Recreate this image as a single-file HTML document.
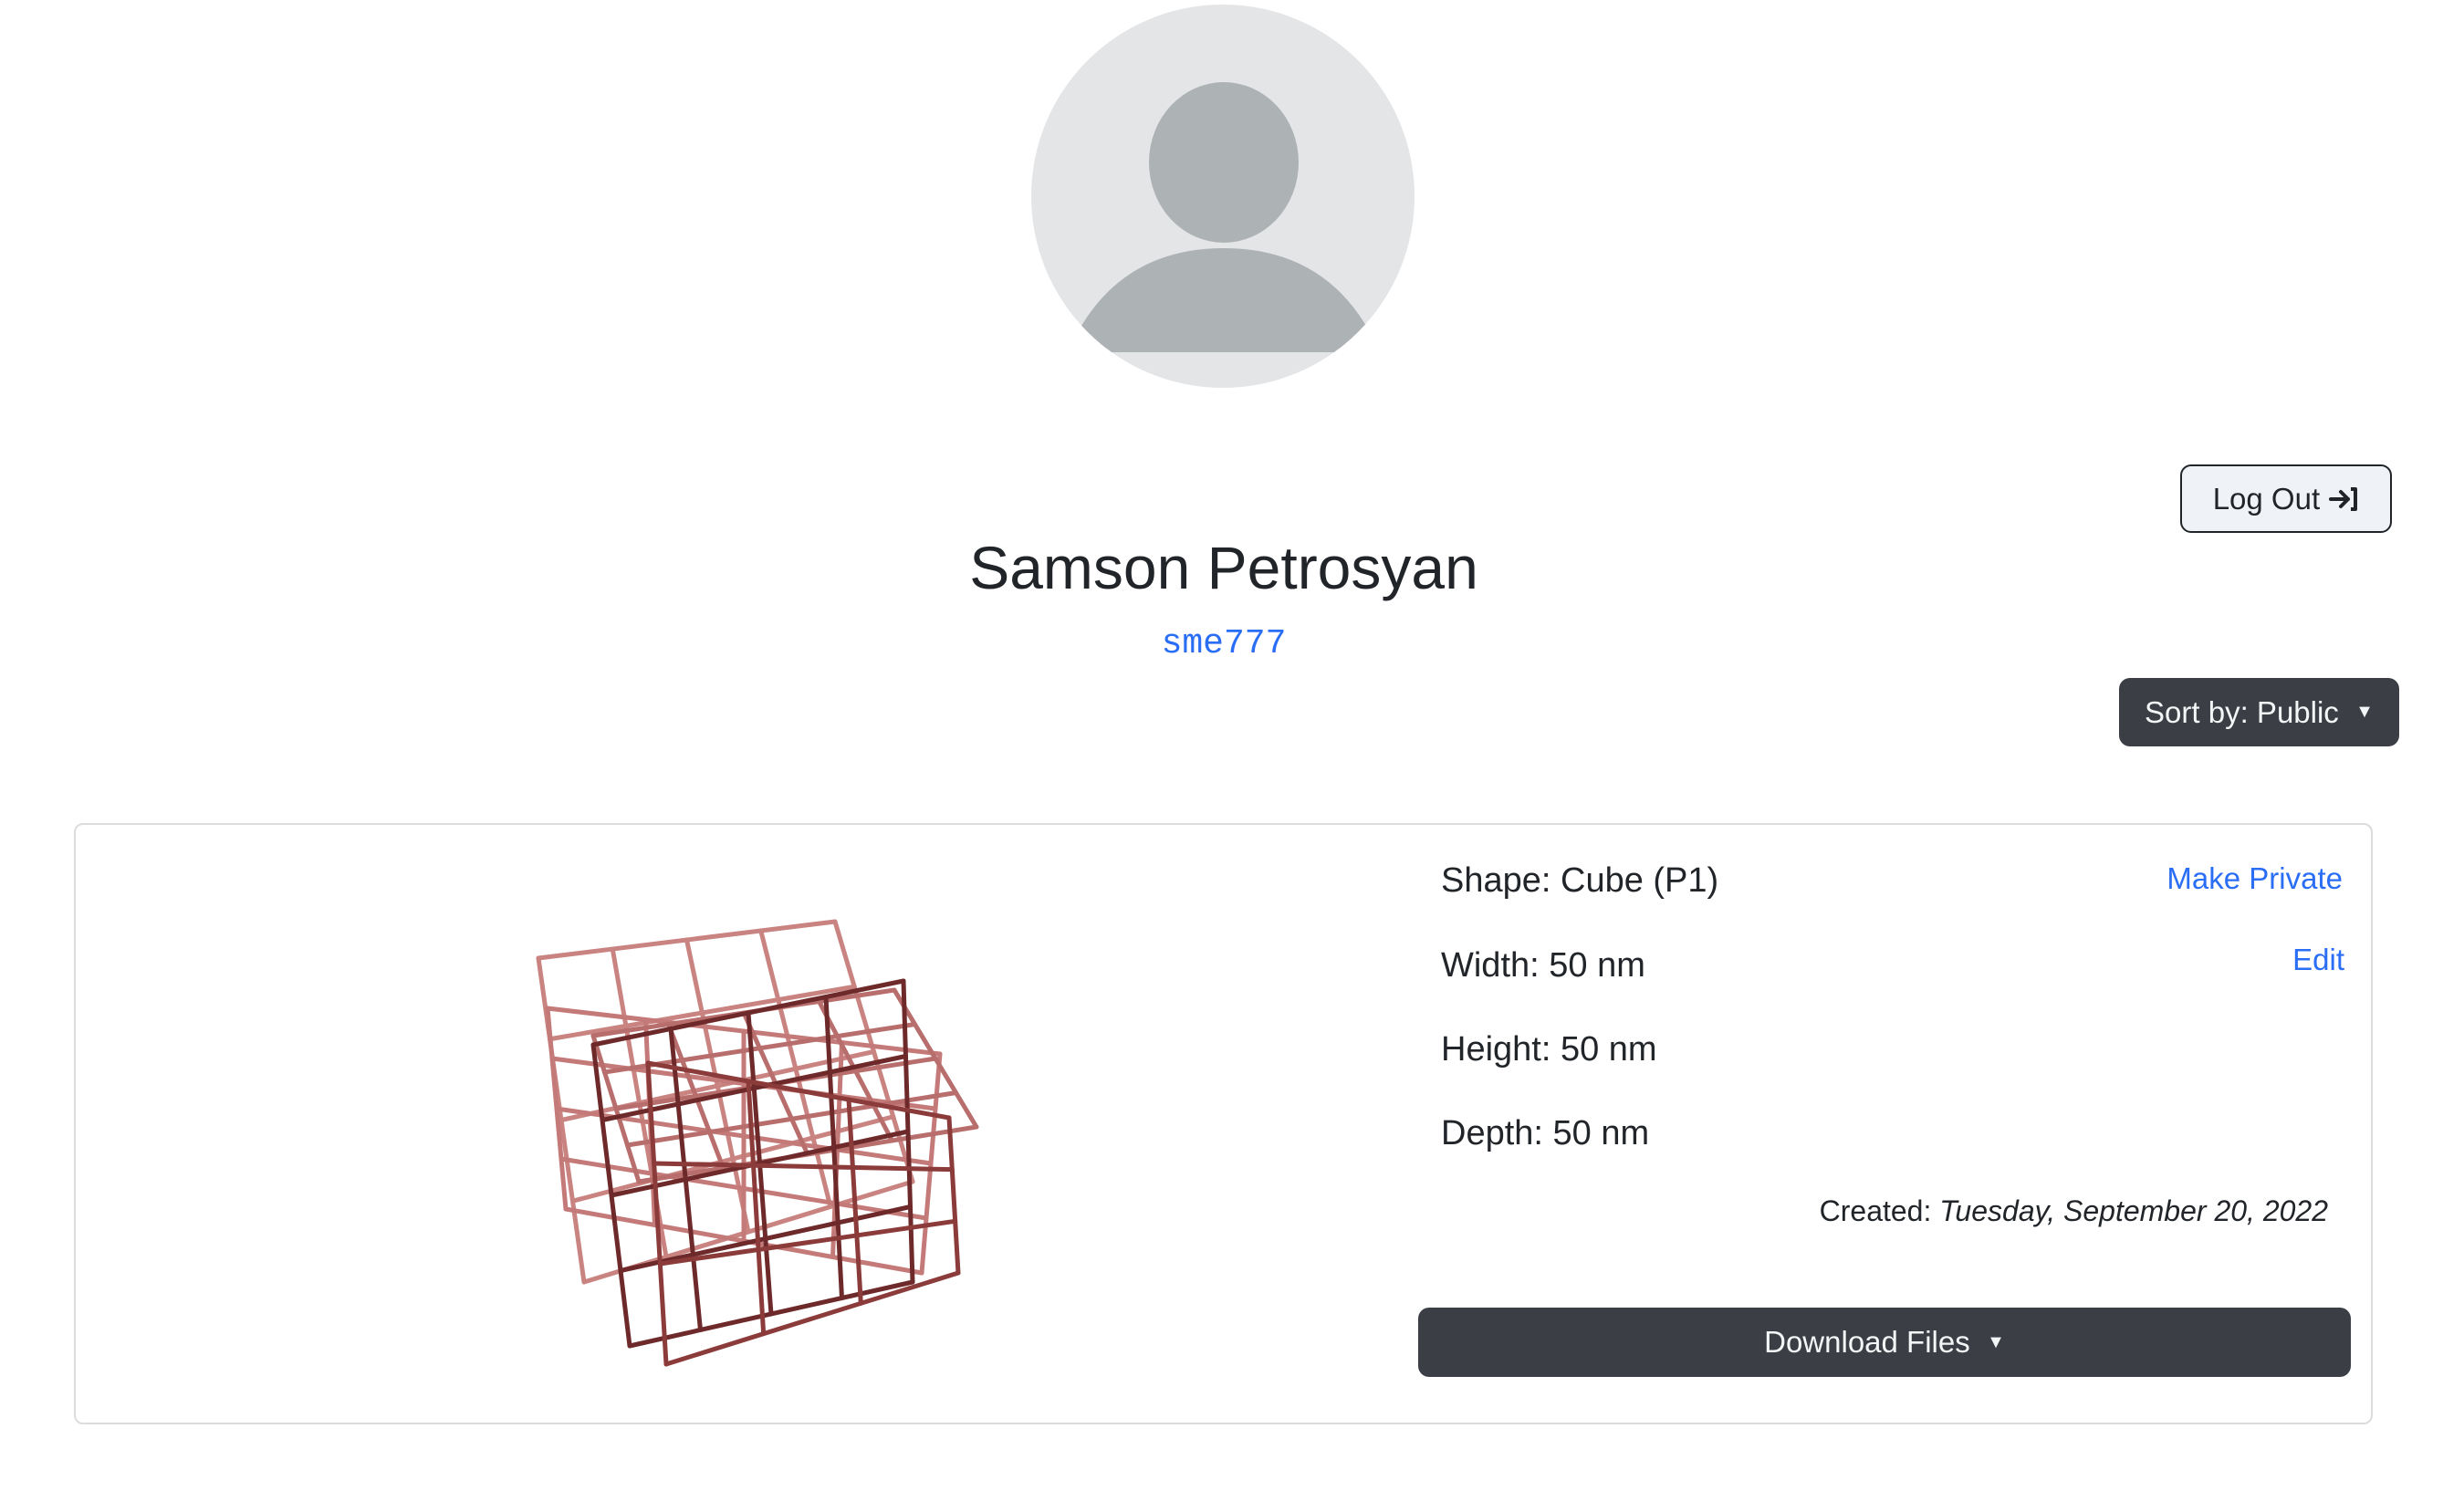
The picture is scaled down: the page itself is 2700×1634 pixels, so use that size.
<!DOCTYPE html>
<html><head><meta charset="utf-8">
<style>
html,body{margin:0;padding:0;background:#fff;}
body{width:2700px;height:1634px;position:relative;overflow:hidden;font-family:"Liberation Sans",sans-serif;color:#212529;}
.abs{position:absolute;}
.btn{position:absolute;box-sizing:border-box;border-radius:12px;display:flex;align-items:center;justify-content:center;font-size:33px;}
</style></head><body>
<svg class="abs" style="left:0;top:0" width="2700" height="440">
  <defs><clipPath id="c"><circle cx="1340" cy="215" r="210"/></clipPath></defs>
  <circle cx="1340" cy="215" r="210" fill="#e4e5e7"/>
  <g clip-path="url(#c)">
    <ellipse cx="1341" cy="178" rx="82" ry="88" fill="#adb2b4"/>
    <path d="M1170 386 Q1220 272 1341 272 Q1462 272 1512 386 Z" fill="#adb2b4"/>
  </g>
</svg>

<div class="btn" style="left:2389px;top:509px;width:232px;height:75px;background:#eff2f7;border:2px solid #212529;color:#212529;">Log Out&nbsp;<svg width="34" height="30" viewBox="0 0 34 30"><path d="M3 15 H22 M14 7 L22 15 L14 23" stroke="#212529" stroke-width="4" fill="none" stroke-linecap="round" stroke-linejoin="round"/><path d="M25 4 H30 V26 H25" stroke="#212529" stroke-width="4" fill="none" stroke-linejoin="round"/></svg></div>

<div class="abs" style="left:0;width:2682px;top:584px;text-align:center;font-size:66px;color:#212529;">Samson Petrosyan</div>
<div class="abs" style="left:0;width:2682px;top:684px;text-align:center;font-size:38px;color:#2a6ef5;font-family:'Liberation Mono',monospace;">sme777</div>

<div class="btn" style="left:2322px;top:743px;width:307px;height:75px;background:#3b3f45;color:#f4f5f7;">Sort by: Public&nbsp;&nbsp;<span style="font-size:20px">▼</span></div>

<div class="abs" style="left:81px;top:902px;width:2519px;height:659px;box-sizing:border-box;border:2px solid #dcdcdc;border-radius:10px;"></div>

<svg id="cube" class="abs" style="left:580px;top:995px" width="540" height="530"></svg>

<div class="abs" style="left:1579px;top:944px;font-size:38px;">Shape: Cube (P1)</div>
<div class="abs" style="left:1579px;top:1037px;font-size:38px;">Width: 50 nm</div>
<div class="abs" style="left:1579px;top:1129px;font-size:38px;">Height: 50 nm</div>
<div class="abs" style="left:1579px;top:1221px;font-size:38px;">Depth: 50 nm</div>
<div class="abs" style="right:133px;top:944px;font-size:33px;color:#2a6ef5;">Make Private</div>
<div class="abs" style="right:131px;top:1033px;font-size:33px;color:#2a6ef5;">Edit</div>
<div class="abs" style="right:149px;top:1309px;font-size:32px;">Created:&nbsp;<i>Tuesday, September 20, 2022</i></div>

<div class="btn" style="left:1554px;top:1433px;width:1022px;height:76px;background:#3b3f45;color:#f4f5f7;">Download Files&nbsp;&nbsp;<span style="font-size:20px">▼</span></div>

<script>
(function(){
var s=document.getElementById('cube'),o='';
function L(a,b,c){o+='<line x1="'+a[0]+'" y1="'+a[1]+'" x2="'+b[0]+'" y2="'+b[1]+'" stroke="'+c+'" stroke-width="5" stroke-linecap="round"/>';}
function lerp(a,b,t){return [a[0]+(b[0]-a[0])*t,a[1]+(b[1]-a[1])*t];}
function face(tl,tr,br,bl,c,n){for(var i=0;i<=n;i++){var t=i/n;L(lerp(tl,bl,t),lerp(tr,br,t),c);L(lerp(tl,tr,t),lerp(bl,br,t),c);}}
face([10,55],[335,15],[420,300],[60,410],'#c98380',4);
face([20,110],[450,160],[430,400],[40,330],'#c47a78',4);
face([70,140],[400,90],[490,240],[120,300],'#b86e6c',4);
face([70,150],[410,80],[420,410],[110,480],'#6e2a2a',4);
face([130,170],[460,230],[470,400],[150,500],'#8a3b3a',3);
s.innerHTML=o;})();
</script>
</body></html>
